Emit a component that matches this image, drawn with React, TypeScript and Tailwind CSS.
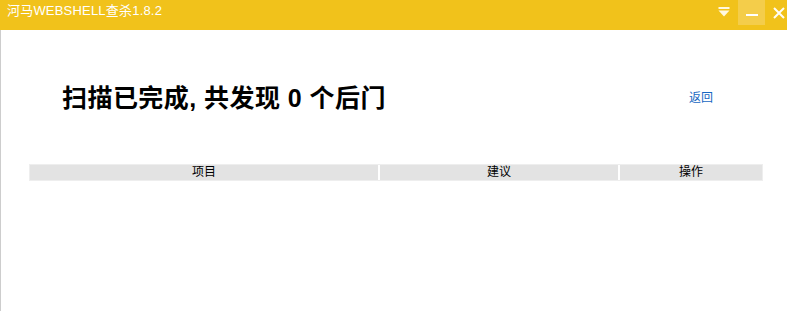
import React from 'react';

const font = "font-['Liberation_Sans','Noto_Sans_CJK_SC',sans-serif]";

const TitleBar: React.FC = () => (
  <div className="h-[30px] bg-[#f1c21b] flex items-start shrink-0">
    <span className="pl-[7px] pt-[3px] text-[13px] leading-[16px] tracking-[0.2px] text-white">河马WEBSHELL查杀1.8.2</span>
    <div className="ml-auto flex items-start">
      {/* dropdown */}
      <svg width="12" height="12" viewBox="0 0 12 12" className="mt-[6px]">
        <rect x="0.5" y="1" width="11" height="2" fill="#fff8e1" />
        <polygon points="0.5,4.5 11.5,4.5 6,10.5" fill="#fff8e1" />
      </svg>
      {/* minimize */}
      <div className="ml-[8px] w-[27px] h-[25px] bg-[#f4cd4a] flex items-center justify-center">
        <div className="w-[12px] h-[2px] bg-white mt-[4px]" />
      </div>
      {/* close */}
      <svg width="14" height="14" viewBox="0 0 14 14" className="ml-[7px] mr-[1px] mt-[6px]">
        <path d="M2 2 L12 12 M12 2 L2 12" stroke="#fffdf5" strokeWidth="2" />
      </svg>
    </div>
  </div>
);

const App: React.FC = () => {
  return (
    <div className={`w-[787px] h-[311px] flex flex-col bg-white overflow-hidden ${font}`}>
      <TitleBar />
      <div className="flex-1 border-l border-[#cdcdcd] pl-[28px] pr-[24px]">
        <div className="mt-[53px] flex items-center justify-between pl-[33px] pr-[50px]">
          <h1 className="text-[25px] leading-[30px] font-bold tracking-[0.45px] text-black">
            扫描已完成, 共发现 0 个后门
          </h1>
          <a className="text-[12px] leading-[14px] text-[#1767c2] cursor-pointer">返回</a>
        </div>
        <div className="mt-[51px] border border-[#eeeeee] flex gap-[2px] bg-white text-[12px] leading-[15px] text-black">
          <div className="w-[348px] bg-[#e3e3e3] text-center">项目</div>
          <div className="w-[238px] bg-[#e3e3e3] text-center">建议</div>
          <div className="w-[142px] bg-[#e3e3e3] text-center">操作</div>
        </div>
      </div>
    </div>
  );
};

export default App;
